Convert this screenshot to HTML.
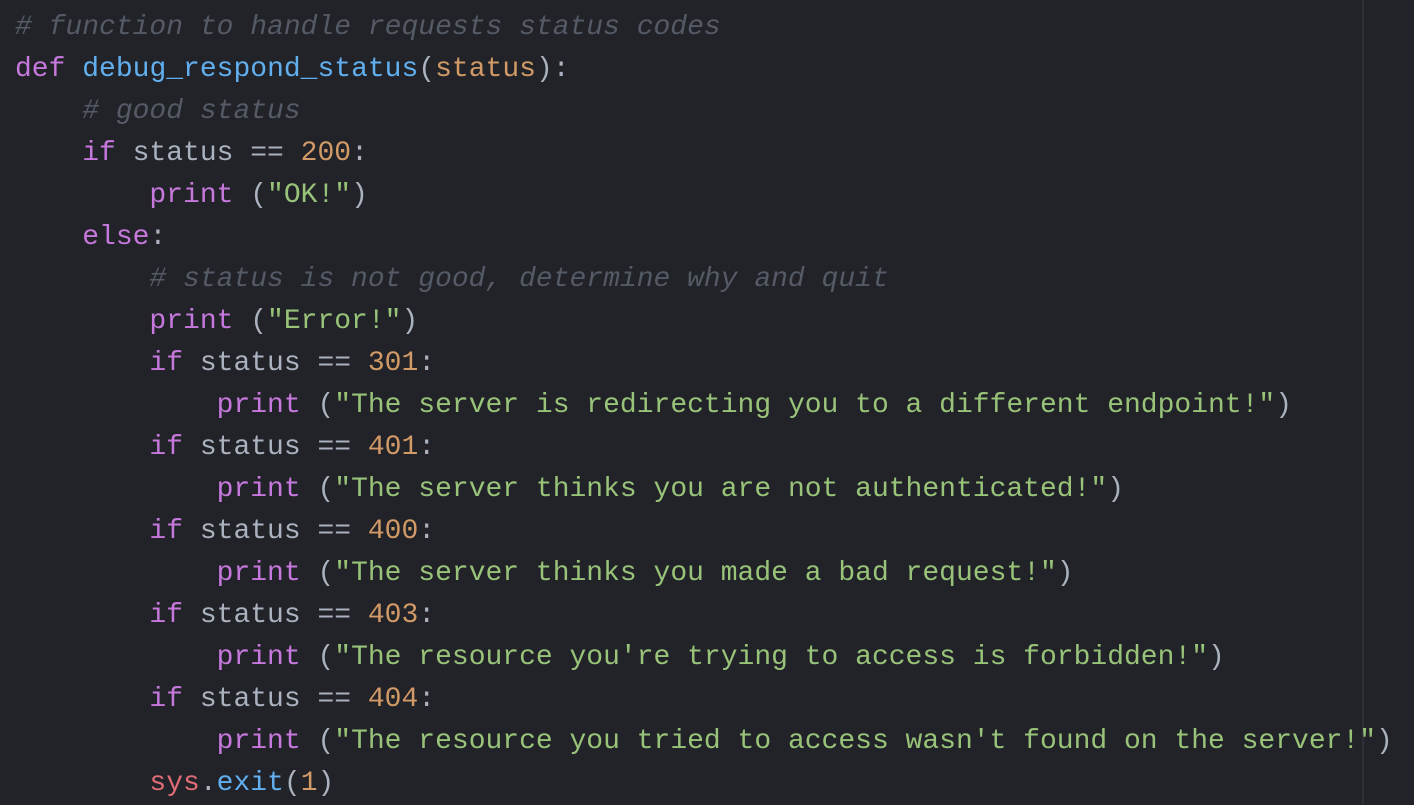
<!DOCTYPE html>
<html><head><meta charset="utf-8"><style>
html,body{margin:0;padding:0;width:1414px;height:804px;overflow:hidden;background:#212328;}
pre{margin:0;position:absolute;left:15px;top:7px;font-family:"Liberation Mono","DejaVu Sans Mono",monospace;font-size:28px;line-height:42px;color:#abb2bf;}
.c{color:#545a66;font-style:italic}.k{color:#c678dd}.f{color:#61afef}.s{color:#98c379}.n{color:#d19a66}.r{color:#e06c75}
.guide{position:absolute;left:1362px;top:0;width:2px;height:804px;background:#2e3137;}
</style></head><body>
<div class="guide"></div>
<pre><span class="c"># function to handle requests status codes</span>
<span class="k">def</span> <span class="f">debug_respond_status</span>(<span class="n">status</span>):
    <span class="c"># good status</span>
    <span class="k">if</span> status == <span class="n">200</span>:
        <span class="k">print</span> (<span class="s">"OK!"</span>)
    <span class="k">else</span>:
        <span class="c"># status is not good, determine why and quit</span>
        <span class="k">print</span> (<span class="s">"Error!"</span>)
        <span class="k">if</span> status == <span class="n">301</span>:
            <span class="k">print</span> (<span class="s">"The server is redirecting you to a different endpoint!"</span>)
        <span class="k">if</span> status == <span class="n">401</span>:
            <span class="k">print</span> (<span class="s">"The server thinks you are not authenticated!"</span>)
        <span class="k">if</span> status == <span class="n">400</span>:
            <span class="k">print</span> (<span class="s">"The server thinks you made a bad request!"</span>)
        <span class="k">if</span> status == <span class="n">403</span>:
            <span class="k">print</span> (<span class="s">"The resource you're trying to access is forbidden!"</span>)
        <span class="k">if</span> status == <span class="n">404</span>:
            <span class="k">print</span> (<span class="s">"The resource you tried to access wasn't found on the server!"</span>)
        <span class="r">sys</span>.<span class="f">exit</span>(<span class="n">1</span>)</pre>
</body></html>
